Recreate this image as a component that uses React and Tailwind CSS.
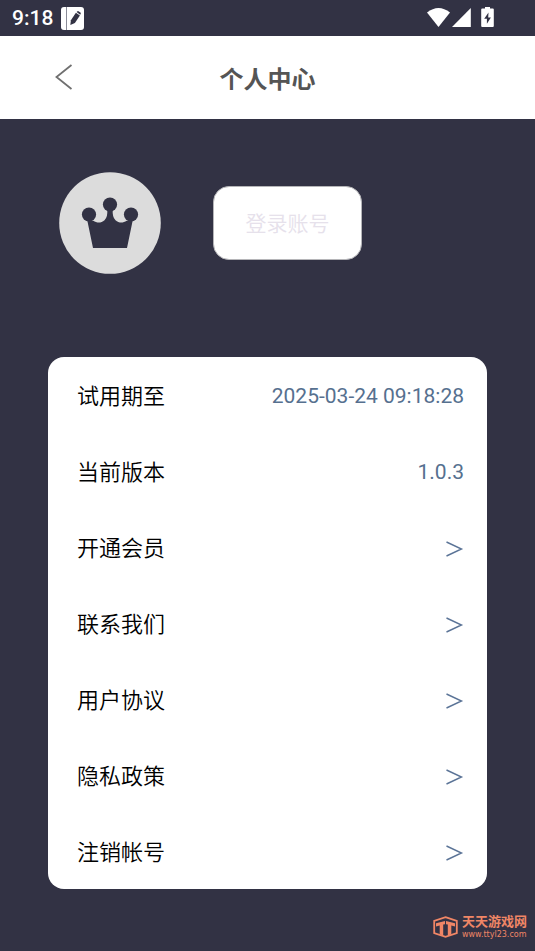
const rows = [
    { label: "试用期至", value: "2025-03-24 09:18:28" },
    { label: "当前版本", value: "1.0.3" },
    { label: "开通会员", link: true },
    { label: "联系我们", link: true },
    { label: "用户协议", link: true },
    { label: "隐私政策", link: true },
    { label: "注销帐号", link: true },
];

const StatusBar = () => (
    <div className="flex h-9 items-center justify-between pl-3 pr-10 text-white">
        <div className="flex items-center gap-2">
            <span className="text-[21px] leading-6 font-medium">9:18</span>
            <svg className="h-6 w-6" viewBox="0 0 24 24" aria-hidden="true">
                <rect x="0" y="1" width="23" height="23" rx="3" fill="#fff" />
                <path d="M5.5 1v23" stroke="#8b8c98" strokeWidth="1" />
                <path d="M9.300 19l.6-4.800 5-7.500 4 2.700-5 7.500z" fill="#323244" />
                <path d="M15.600 6l.6-.6q.6-.5 1.300-.1l1.900 1.200q.7.6.3 1.300l-.5.9z" fill="#323244" />
            </svg>
        </div>
        <svg className="h-6 w-[68px]" viewBox="0 0 68 24" fill="#fff" aria-hidden="true">
            <path d="M0 6.500Q11.500-2.500 23 6.500L11.500 21z" />
            <path d="M25 21L43.800 2v19z" />
            <path d="M58 1h5v1.500h2.800q1 0 1 1V20q0 1-1 1H55.200q-1 0-1-1V3.500q0-1 1-1H58z" />
            <path d="M61.500 6.500l-4.300 6.300h2.700v5l4-6.300h-2.700z" fill="#323244" />
        </svg>
    </div>
);

const Header = () => (
    <header className="relative flex h-[83px] items-center justify-center bg-white">
        <button type="button" aria-label="返回" className="absolute inset-y-0 left-12 flex w-8 items-center justify-center pb-0.5">
            <svg className="h-7 w-5" viewBox="0 0 20 28" fill="none" stroke="#707070" strokeWidth="1.8" aria-hidden="true">
                <path d="M17.500 2L2.500 14l15 12" />
            </svg>
        </button>
        <h1 className="pt-1 text-[24px] leading-8 font-bold text-[#555555]">个人中心</h1>
    </header>
);

const Avatar = () => (
    <svg className="h-[102px] w-[102px] shrink-0" viewBox="0 0 102 102" aria-hidden="true">
        <circle cx="51" cy="51" r="50.800" fill="#dcdcdc" />
        <g fill="#323244">
            <circle cx="51" cy="32.500" r="7.100" />
            <circle cx="30" cy="42.500" r="7.100" />
            <circle cx="72" cy="42.500" r="7.100" />
            <path d="M28.300 48.500L34.300 48.800C38 51.300 42 51.300 45.500 48.300Q48.800 45 48.300 38H53.700Q53.200 45 56.500 48.300C60 51.300 64 51.300 67.700 48.800L73.700 48.500 68 76H34z" />
        </g>
    </svg>
);

const Watermark = () => (
    <div className="absolute right-2 bottom-3 flex items-center gap-1 text-[#f08666]">
        <svg className="h-[22px] w-[25px]" viewBox="0 0 25 22" fill="none" stroke="currentColor" aria-hidden="true">
            <path d="M12.500 1.200L23.800 5v12l-11.300 3.800L1.200 17V5z" strokeWidth="1.800" />
            <path d="M3 7.200l9-2.200v3.200l-1.800.4V19.500l-3.500-1V9.500L3 10.400z" fill="currentColor" stroke="none" />
            <path d="M22 7.200L13 5v3.200l1.800.4V19.500l3.500-1V9.500l3.700.9z" fill="currentColor" stroke="none" />
        </svg>
        <div className="flex flex-col">
            <span className="text-[13px] leading-[13px] font-bold">天天游戏网</span>
            <span className="pt-0.5 font-['DejaVu_Sans',sans-serif] text-[8px] leading-[9px]">www.ttyl23.com</span>
        </div>
    </div>
);

const App = () => {
    return (
        <div className="relative min-h-screen bg-[#323244] font-[Roboto,'Noto_Sans_CJK_SC',sans-serif]">
            <StatusBar />
            <Header />
            <main className="px-12 pt-[53px] pb-15">
                <section className="flex items-center gap-13 pl-[11px]">
                    <Avatar />
                    <button type="button" className="h-[74px] w-[149px] rounded-2xl border border-[#b5b5b8] bg-white pt-1 text-[21px] font-[350] text-[#e6e1eb]">
                        登录账号
                    </button>
                </section>

                <ul className="mt-[83px] rounded-2xl bg-white text-[22px] text-black">
                    {rows.map((row) => (
                        <li key={row.label}>
                            {row.link ? (
                                <a href="#" className="flex h-[76px] items-center justify-between pt-[3px] pr-[23px] pl-[29px]">
                                    <span className="font-[350]">{row.label}</span>
                                    <svg className="h-5 w-5" viewBox="0 0 20 20" fill="none" stroke="#5b7497" strokeWidth="1.400" aria-hidden="true">
                                        <path d="M2.500 3L17.500 10l-15 7" />
                                    </svg>
                                </a>
                            ) : (
                                <div className="flex h-[76px] items-center justify-between pt-[3px] pr-[23px] pl-[29px]">
                                    <span className="font-[350]">{row.label}</span>
                                    <span className="text-[21px] text-[#56708f]">{row.value}</span>
                                </div>
                            )}
                        </li>
                    ))}
                </ul>
            </main>
            <Watermark />
        </div>
    );
};

export default App;
